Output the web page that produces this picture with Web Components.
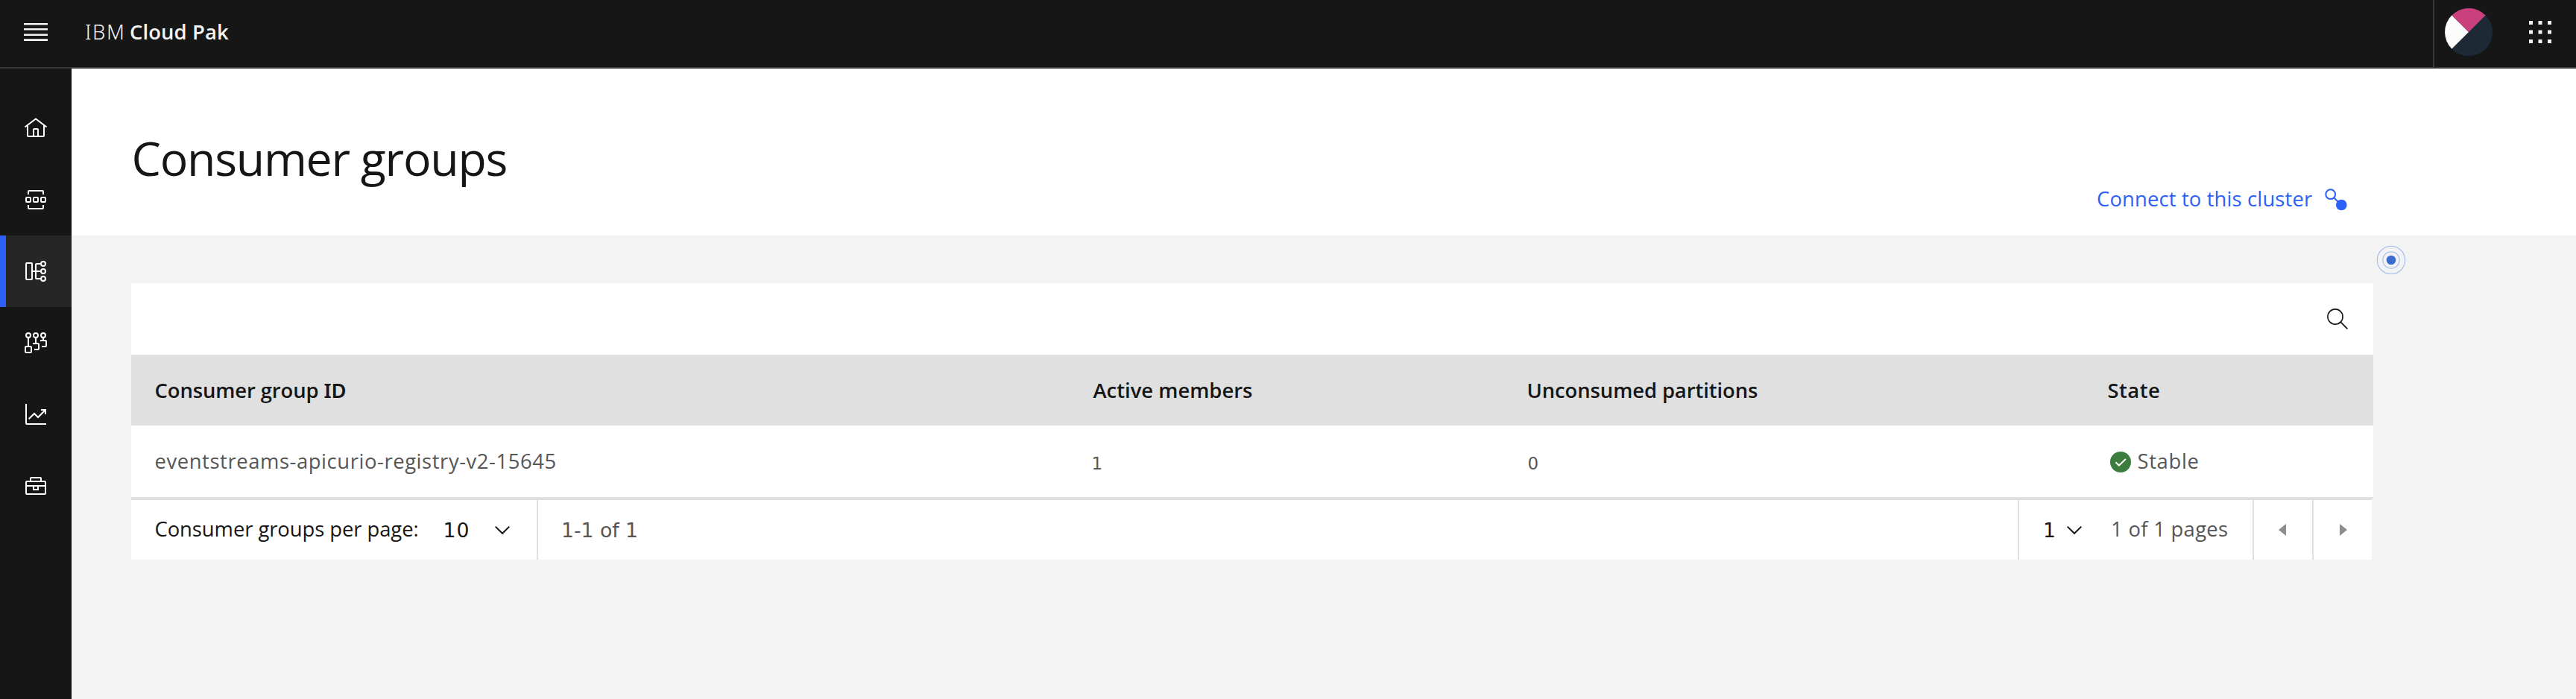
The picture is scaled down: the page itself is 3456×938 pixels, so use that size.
<!DOCTYPE html>
<html lang="en">
<head>
<meta charset="utf-8">
<title>Consumer groups</title>
<style>
html,body{margin:0;height:100%;background:#f3f3f3}
body{font-family:"Open Sans","Noto Sans",sans-serif;overflow:hidden}
</style>
</head>
<body>
<cp-app></cp-app>
<script>
const define = (name, html) => {
  const template = document.createElement('template');
  template.innerHTML = html;
  customElements.define(name, class extends HTMLElement {
    constructor() {
      super();
      this.attachShadow({ mode: 'open' }).append(template.content.cloneNode(true));
    }
  });
};

// One line of text, tracked so that its glyphs span the "span" attribute in pixels.
const pen = document.createElement('canvas').getContext('2d');
customElements.define('cp-text', class extends HTMLElement {
  connectedCallback() {
    if (this.shadowRoot) return;
    const root = this.attachShadow({ mode: 'open' });
    root.innerHTML = '<style>:host{display:block;flex:none;white-space:pre}</style><slot></slot>';
    const text = this.textContent;
    const style = getComputedStyle(this);
    pen.font = `${style.fontWeight} ${style.fontSize} ${style.fontFamily}`;
    const m = pen.measureText(text);
    const ink = m.actualBoundingBoxLeft + m.actualBoundingBoxRight;
    const span = +this.getAttribute('span');
    const track = text.length > 1 ? (span - ink) / (text.length - 1) : 0;
    this.style.letterSpacing = track.toFixed(3) + 'px';
    this.style.textIndent = m.actualBoundingBoxLeft.toFixed(2) + 'px';
    this.style.width = span + 'px';
  }
});

const icons = {
  menu: '<path stroke="none" fill="currentColor" d="M0 4h32v2.6H0zM0 11h32v2.6H0zM0 18.4h32V21H0zM0 25.2h32V28H0z"/>',
  home: '<path d="M1.5 14.5 16 3.4 30.5 14.5M5 12v14a1 1 0 0 0 1 1h20a1 1 0 0 0 1-1V12M13 27v-9a1 1 0 0 1 1-1h4a1 1 0 0 1 1 1v9"/>',
  topics: '<path d="M6 9V5a1 1 0 0 1 1-1h18a1 1 0 0 1 1 1v4M6 23v4a1 1 0 0 0 1 1h18a1 1 0 0 0 1-1v-4"/><rect x="3" y="13" width="6" height="6" rx="1"/><rect x="13" y="13" width="6" height="6" rx="1"/><rect x="23" y="13" width="6" height="6" rx="1"/>',
  groups: '<rect x="3" y="5" width="8" height="22" rx="1"/><circle cx="26" cy="6" r="3"/><circle cx="26" cy="16" r="3"/><circle cx="26" cy="26" r="3"/><path d="M23 6h-6a1 1 0 0 0-1 1v18a1 1 0 0 0 1 1h6M11 16h12"/>',
  schema: '<circle cx="6" cy="6" r="3"/><circle cx="16" cy="6" r="3"/><circle cx="26" cy="6" r="3"/><rect x="2" y="21" width="8" height="8" rx="1"/><path d="M6 9v12M16 9v8M12 17h7a1 1 0 0 1 1 1v6a1 1 0 0 1-1 1h-5M26 9v4M22 13h7a1 1 0 0 1 1 1v6a1 1 0 0 1-1 1h-5"/>',
  chart: '<path d="M3 2v26a1 1 0 0 0 1 1h26M6.6 22.2 14 15l5 5L29 10M23 10h6v6"/>',
  toolbox: '<rect x="3" y="10" width="26" height="17" rx="1"/><path d="M3 16h26M9 10V6a1 1 0 0 1 1-1h12a1 1 0 0 1 1 1v4M13 16v5h6v-5"/>',
  connect: '<circle cx="8.7" cy="8.7" r="6.4"/><path d="m13.2 13.2 8 8"/><circle cx="23.3" cy="23" r="7.3" fill="currentColor" stroke="none"/>',
  search: '<circle cx="13" cy="13" r="10.1" stroke-width="1.6"/><path stroke-width="1.8" d="m20.2 20.2 9.2 9.2"/>',
  check: '<circle cx="16" cy="16" r="14" fill="#3b7d3f" stroke="none"/><path stroke="#fff" d="m9.4 16.2 4.5 4.3 9-8.4"/>',
  chevron: '<path d="m6.7 11.6 9.3 9.2 9.3-9.2"/>',
  left: '<path fill="currentColor" stroke="none" d="M21 8v16l-10-8z"/>',
  right: '<path fill="currentColor" stroke="none" d="M11 8v16l10-8z"/>',
  apps: '<path fill="currentColor" stroke="none" d="M1 1h5v5H1zM13.5 1h5v5h-5zM26 1h5v5h-5zM1 13.5h5v5H1zM13.5 13.5h5v5h-5zM26 13.5h5v5h-5zM1 26h5v5H1zM13.5 26h5v5h-5zM26 26h5v5h-5z"/>'
};
customElements.define('cp-icon', class extends HTMLElement {
  constructor() {
    super();
    this.attachShadow({ mode: 'open' });
  }
  connectedCallback() {
    this.shadowRoot.innerHTML = `<style>:host{display:block;flex:none;width:32px;height:32px}svg{display:block;width:100%;height:100%}</style>
      <svg viewBox="0 0 32 32" fill="none" stroke="currentColor" stroke-width="2">${icons[this.getAttribute('name')]}</svg>`;
  }
});

define('cp-header', `<style>
:host{display:flex;height:90px;background:#161616;border-bottom:2px solid #393939;color:#f4f4f4;font-size:27.4px;line-height:36px}
.menu{padding:27px 51px 0 32px}
.name{display:flex;align-items:center;gap:10px;padding-bottom:5px;flex:1}
.ibm{font-family:"Noto Sans",sans-serif;font-weight:300}
.pak{font-weight:600}
.user{border-left:2px solid #393939;padding:11px 48px 0 14px}
.user svg{display:block}
.apps{padding:27px 32px 0 0}
</style>
<cp-icon class="menu" name="menu"></cp-icon>
<div class="name"><cp-text class="ibm" span="50">IBM</cp-text><cp-text class="pak" span="132">Cloud Pak</cp-text></div>
<div class="user"><svg width="64" height="64" viewBox="0 0 64 64"><circle cx="32" cy="32" r="32" fill="#1d2a35"/><path fill="#fcfcfc" d="M32 32 9.4 9.4a32 32 0 0 0 0 45.2z"/><path fill="#c9407c" d="M32 32 9.4 9.4a32 32 0 0 1 45.2 0z"/></svg></div>
<cp-icon class="apps" name="apps"></cp-icon>`);

define('cp-nav-item', `<style>
:host{display:flex;height:96px;align-items:center;justify-content:center;box-sizing:border-box;color:#fff}
:host([active]){background:linear-gradient(90deg,#2d60f6 8px,#262626 8px)}
</style><slot></slot>`);

define('cp-nav', `<style>:host{display:block;width:96px;box-sizing:border-box;padding-top:32px;background:#161616}</style>
<cp-nav-item><cp-icon name="home"></cp-icon></cp-nav-item>
<cp-nav-item><cp-icon name="topics"></cp-icon></cp-nav-item>
<cp-nav-item active><cp-icon name="groups"></cp-icon></cp-nav-item>
<cp-nav-item><cp-icon name="schema"></cp-icon></cp-nav-item>
<cp-nav-item><cp-icon name="chart"></cp-icon></cp-nav-item>
<cp-nav-item><cp-icon name="toolbox"></cp-icon></cp-nav-item>`);

define('cp-title', `<style>
:host{display:flex;justify-content:space-between;height:224px;background:#fff;color:#161616;padding:0 306px 0 83.5px}
h1{margin:0;padding-top:80px;font-size:62.6px;font-weight:400;line-height:80px}
a{display:flex;align-items:center;gap:16px;height:36px;margin-top:158px;font-size:27.4px;line-height:36px;color:#2d60f6}
a cp-text{padding-bottom:2px}
</style>
<h1><cp-text span="500">Consumer groups</cp-text></h1>
<a><cp-text span="288">Connect to this cluster</cp-text><cp-icon name="connect"></cp-icon></a>`);

define('cp-table', `<style>
:host{display:block;width:3008px;font-size:27.4px;line-height:36px;color:#161616}
.bar{display:flex;height:96px;background:#fff;box-sizing:border-box;padding:32px 32px 0 0;justify-content:flex-end}
.row{display:grid;grid-template-columns:1258px 584px 778px 1fr;align-items:center;padding-left:32.5px}
.head{height:95px;background:#e0e0e0;font-weight:600}
.body{height:96px;background:#fff;color:#565656;border-bottom:2px solid #e0e0e0}
.num{font-family:"DejaVu Sans",sans-serif;font-size:23px;padding-top:6px}
.state{display:flex;align-items:center;gap:8px}
.state cp-icon{margin-top:2px}
.id{display:flex;gap:8px}
.cap{font-family:"Noto Sans",sans-serif}
</style>
<div class="bar"><cp-icon name="search"></cp-icon></div>
<div class="row head"><div class="id"><cp-text span="218">Consumer group</cp-text><cp-text class="cap" span="29">ID</cp-text></div><cp-text span="213.5">Active members</cp-text><cp-text span="307.5">Unconsumed partitions</cp-text><cp-text span="68.5">State</cp-text></div>
<div class="row body"><cp-text span="537">eventstreams-apicurio-registry-v2-15645</cp-text><cp-text class="num" span="12">1</cp-text><cp-text class="num" span="12">0</cp-text><div class="state"><cp-icon name="check"></cp-icon><cp-text span="80">Stable</cp-text></div></div>`);

define('cp-pagination', `<style>
:host{display:flex;width:3006px;height:80px;background:#fff;border-top:2px solid #e0e0e0;font-size:27.4px;line-height:36px;color:#565656}
div{display:flex;align-items:center;box-sizing:border-box}
cp-text{padding-bottom:2px}
cp-text.n{font-family:"DejaVu Sans",sans-serif;font-size:26.7px;padding:1px 0 0}
.dark{color:#161616}
.size{width:544px;padding-left:32.5px}
.size .n{margin-left:36px}
.size cp-icon{margin-left:29px}
.range{flex:1;border-left:2px solid #e0e0e0;padding-left:33px}
.page{width:315px;border-left:2px solid #e0e0e0;padding-left:34px}
.page cp-icon{margin-left:10px;margin-right:35px}
.step{width:80px;border-left:2px solid #e0e0e0;justify-content:center;color:#8d8d8d}
.step cp-icon{margin-right:2px}
.step.next cp-icon{margin:0 0 0 2px}
</style>
<div class="size dark"><cp-text span="352">Consumer groups per page:</cp-text><cp-text class="n" span="32">10</cp-text><cp-icon name="chevron"></cp-icon></div>
<div class="range"><cp-text class="n" span="99">1-1 of 1</cp-text></div>
<div class="page"><cp-text class="n dark" span="14">1</cp-text><cp-icon class="dark" name="chevron"></cp-icon><cp-text span="154">1 of 1 pages</cp-text></div>
<div class="step"><cp-icon name="left"></cp-icon></div>
<div class="step next"><cp-icon name="right"></cp-icon></div>`);

define('cp-beacon', `<style>:host{display:block;width:40px;height:40px}svg{display:block}</style>
<svg width="40" height="40" fill="none" stroke="#a9c0ea" stroke-width="1.2"><circle cx="20" cy="20" r="18.7"/><circle cx="20" cy="20" r="11.2"/><circle cx="20" cy="20" r="6.3" fill="#3d6ccf" stroke="none"/></svg>`);

define('cp-app', `<style>
:host{display:flex;flex-direction:column;height:938px}
.main{display:flex;flex:1}
.content{flex:1;position:relative}
.list{padding:64px 0 0 80px}
cp-beacon{position:absolute;left:3092px;top:237px}
</style>
<cp-header></cp-header>
<div class="main"><cp-nav></cp-nav>
<div class="content"><cp-title></cp-title><div class="list"><cp-table></cp-table><cp-pagination></cp-pagination></div><cp-beacon></cp-beacon></div></div>`);
</script>
</body>
</html>
